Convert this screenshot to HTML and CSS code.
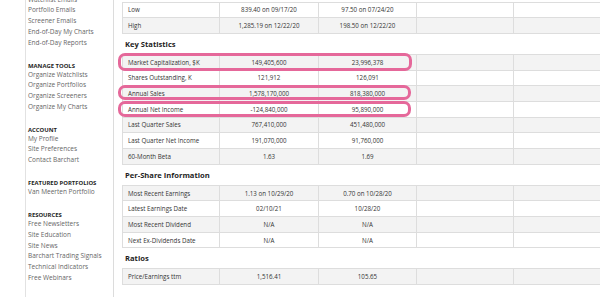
FILE: index.html
```html
<!DOCTYPE html>
<html lang="en">
<head>
  <meta charset="UTF-8">
  <title>Company Comparison</title>
  <link rel="stylesheet" href="styles.css">
</head>
<body>
  <div class="page">
    <aside class="sidebar">
      <ul class="links first">
        <li><a href="#">Watchlist Emails</a></li>
        <li><a href="#">Portfolio Emails</a></li>
        <li><a href="#">Screener Emails</a></li>
        <li><a href="#">End-of-Day My Charts</a></li>
        <li><a href="#">End-of-Day Reports</a></li>
      </ul>

      <h4>Manage Tools</h4>
      <ul class="links">
        <li><a href="#">Organize Watchlists</a></li>
        <li><a href="#">Organize Portfolios</a></li>
        <li><a href="#">Organize Screeners</a></li>
        <li><a href="#">Organize My Charts</a></li>
      </ul>

      <h4>Account</h4>
      <ul class="links">
        <li><a href="#">My Profile</a></li>
        <li><a href="#">Site Preferences</a></li>
        <li><a href="#">Contact Barchart</a></li>
      </ul>

      <h4>Featured Portfolios</h4>
      <ul class="links">
        <li><a href="#">Van Meerten Portfolio</a></li>
      </ul>

      <h4>Resources</h4>
      <ul class="links">
        <li><a href="#">Free Newsletters</a></li>
        <li><a href="#">Site Education</a></li>
        <li><a href="#">Site News</a></li>
        <li><a href="#">Barchart Trading Signals</a></li>
        <li><a href="#">Technical Indicators</a></li>
        <li><a href="#">Free Webinars</a></li>
      </ul>
    </aside>

    <main class="content">
      <div class="block">
        <table class="stats">
          <colgroup>
            <col class="c-label"><col class="c-a"><col class="c-b"><col class="c-c"><col class="c-d">
          </colgroup>
          <tr><td>Low</td><td>839.40 on 09/17/20</td><td>97.50 on 07/24/20</td><td></td><td></td></tr>
          <tr><td>High</td><td>1,285.19 on 12/22/20</td><td>198.50 on 12/22/20</td><td></td><td></td></tr>
        </table>
      </div>

      <h3>Key Statistics</h3>
      <div class="block">
        <table class="stats">
          <colgroup>
            <col class="c-label"><col class="c-a"><col class="c-b"><col class="c-c"><col class="c-d">
          </colgroup>
          <tr><td>Market Capitalization, $K</td><td>149,405,600</td><td>23,996,378</td><td></td><td></td></tr>
          <tr><td>Shares Outstanding, K</td><td>121,912</td><td>126,091</td><td></td><td></td></tr>
          <tr><td>Annual Sales</td><td>1,578,170,000</td><td>818,380,000</td><td></td><td></td></tr>
          <tr><td>Annual Net Income</td><td>-124,840,000</td><td>95,890,000</td><td></td><td></td></tr>
          <tr><td>Last Quarter Sales</td><td>767,410,000</td><td>451,480,000</td><td></td><td></td></tr>
          <tr><td>Last Quarter Net Income</td><td>191,070,000</td><td>91,760,000</td><td></td><td></td></tr>
          <tr><td>60-Month Beta</td><td>1.63</td><td>1.69</td><td></td><td></td></tr>
        </table>
        <!-- highlighted rows -->
        <span class="mark mark-cap"></span>
        <span class="mark mark-sales"></span>
        <span class="mark mark-income"></span>
      </div>

      <h3>Per-Share Information</h3>
      <div class="block">
        <table class="stats">
          <colgroup>
            <col class="c-label"><col class="c-a"><col class="c-b"><col class="c-c"><col class="c-d">
          </colgroup>
          <tr><td>Most Recent Earnings</td><td>1.13 on 10/29/20</td><td>0.70 on 10/28/20</td><td></td><td></td></tr>
          <tr><td>Latest Earnings Date</td><td>02/10/21</td><td>10/28/20</td><td></td><td></td></tr>
          <tr><td>Most Recent Dividend</td><td>N/A</td><td>N/A</td><td></td><td></td></tr>
          <tr><td>Next Ex-Dividends Date</td><td>N/A</td><td>N/A</td><td></td><td></td></tr>
        </table>
      </div>

      <h3>Ratios</h3>
      <div class="block">
        <table class="stats">
          <colgroup>
            <col class="c-label"><col class="c-a"><col class="c-b"><col class="c-c"><col class="c-d">
          </colgroup>
          <tr><td>Price/Earnings ttm</td><td>1,516.41</td><td>105.65</td><td></td><td></td></tr>
        </table>
      </div>
    </main>
  </div>
</body>
</html>
```

FILE: styles.css
```css
html, body {
  margin: 0;
  height: 100%;
  overflow: hidden;
  background: #fff;
}

body {
  font-family: "Open Sans", "Liberation Sans", sans-serif;
  color: #333;
}

.page {
  display: flex;
  height: 100%;
}

/* left navigation */
.sidebar {
  width: 85px;
  margin-left: 25px;
  padding-left: 2px;
  border-left: 1px solid #e2e2e2;
  border-right: 1px solid #dcdcdc;
  flex-shrink: 0;
}

.sidebar h4 {
  margin: 13.2px 0 0;
  font-size: 5.9px;
  line-height: 8px;
  font-weight: 700;
  text-transform: uppercase;
  color: #1e1e1e;
}

.links {
  list-style: none;
  margin: 0;
  padding: 0;
}

.links.first {
  margin-top: -5.4px;
}

.links li {
  font-size: 6.5px;
  line-height: 10.75px;
  white-space: nowrap;
}

.links a {
  color: #666;
  text-decoration: none;
}

/* main column */
.content {
  flex: 1;
  padding: 1.5px 0 0 8px;
  overflow: hidden;
}

.content h3 {
  margin: 0;
  padding-left: 3px;
  font-size: 7.6px;
  line-height: 20px;
  font-weight: 700;
  color: #1e1e1e;
}

.block {
  position: relative;
  width: 489px;
}

.stats {
  width: 489px;
  table-layout: fixed;
  border-collapse: collapse;
  font-size: 6.2px;
  color: #333;
}

.c-label { width: 97px; }
.c-a { width: 99px; }
.c-b { width: 98px; }
.c-c { width: 97px; }
.c-d { width: 98px; }

.stats tr {
  height: 15.7px;
}

.stats tr:nth-child(odd) {
  background: #f3f3f3;
}

.stats td {
  border: 1px solid #dddddd;
  padding: 0 5px;
  text-align: center;
  white-space: nowrap;
  vertical-align: middle;
}

.stats td:first-child {
  text-align: left;
}

/* first table starts with the low row on white */
.block:first-child .stats tr:nth-child(odd) {
  background: #fff;
}

.block:first-child .stats tr:nth-child(even) {
  background: #f3f3f3;
}

.mark {
  position: absolute;
  left: -4px;
  box-sizing: border-box;
  border: 3px solid #e5689a;
  border-radius: 7px;
}

.mark-cap {
  top: -1.3px;
  width: 294px;
  height: 18.3px;
}

.mark-sales {
  top: 31.3px;
  width: 293px;
  height: 14.5px;
}

.mark-income {
  top: 47px;
  width: 293px;
  height: 15.7px;
}
```
